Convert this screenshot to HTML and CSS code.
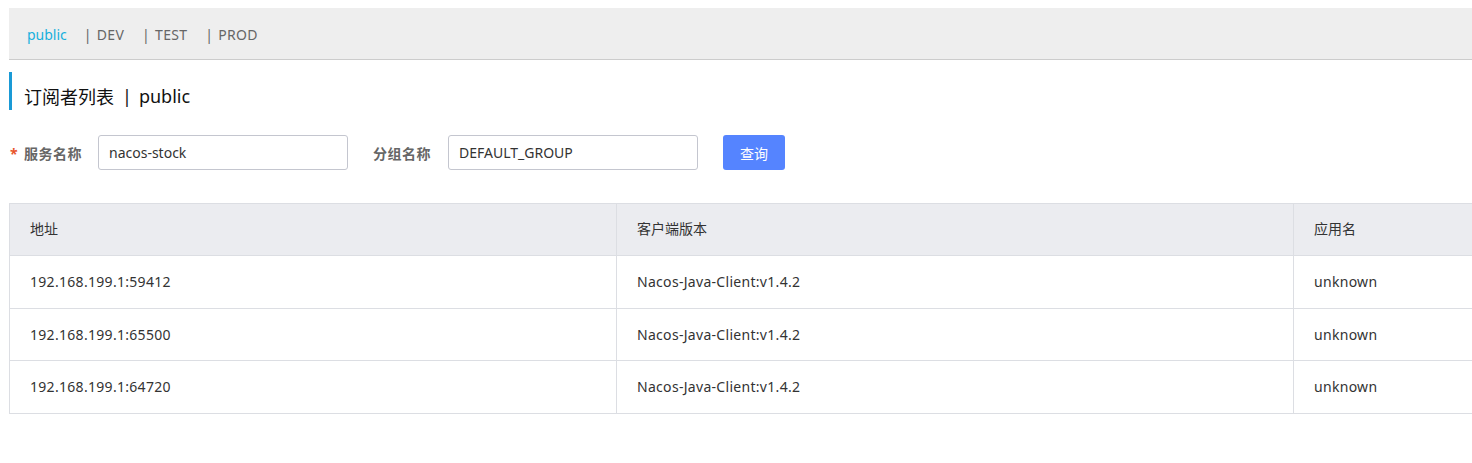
FILE: index.html
```html
<!DOCTYPE html>
<html lang="zh-CN">
<head>
<meta charset="utf-8">
<title>订阅者列表</title>
<link rel="stylesheet" href="styles.css">
</head>
<body>
<div class="page">
  <div class="ns-bar">
    <span class="ns ns-active">public</span>
    <span class="ns"><span class="sep">|</span> DEV</span>
    <span class="ns"><span class="sep">|</span> TEST</span>
    <span class="ns"><span class="sep">|</span> PROD</span>
  </div>

  <div class="title">
    <span>订阅者列表</span><span class="title-sep">|</span><span>public</span>
  </div>

  <form class="search">
    <label class="label"><span class="req">*</span>服务名称</label>
    <input class="input" type="text" value="nacos-stock">
    <label class="label label-2">分组名称</label>
    <input class="input" type="text" value="DEFAULT_GROUP">
    <button class="btn" type="button">查询</button>
  </form>

  <table class="table">
    <colgroup>
      <col class="c1"><col class="c2"><col class="c3">
    </colgroup>
    <thead>
      <tr><th>地址</th><th>客户端版本</th><th>应用名</th></tr>
    </thead>
    <tbody>
      <tr><td>192.168.199.1:59412</td><td>Nacos-Java-Client:v1.4.2</td><td>unknown</td></tr>
      <tr><td>192.168.199.1:65500</td><td>Nacos-Java-Client:v1.4.2</td><td>unknown</td></tr>
      <tr><td>192.168.199.1:64720</td><td>Nacos-Java-Client:v1.4.2</td><td>unknown</td></tr>
    </tbody>
  </table>
</div>
</body>
</html>
```

FILE: styles.css
```css
html, body {
  margin: 0;
  padding: 0;
  background: #fff;
  overflow: hidden;
}
body {
  font-family: "Noto Sans", "Noto Sans CJK SC", sans-serif;
  font-size: 14px;
  color: #333;
}
.page {
  width: 1560px;
  padding: 8px 0 0 9px;
}
.ns-bar {
  background: #eeeeee;
  border-bottom: 1px solid #cccccc;
  display: flex;
  align-items: center;
  padding-left: 18px;
  padding-top: 2px;
  box-sizing: border-box;
  height: 52px;
}
.ns {
  color: #666;
  font-size: 14px;
  margin-right: 18px;
  line-height: 20px;
  letter-spacing: 0.3px;
}
.ns-active {
  color: #17b0dd;
  margin-right: 17px;
  letter-spacing: 0;
}
.sep {
  margin-right: 1px;
}
.title {
  margin-top: 12px;
  height: 38px;
  border-left: 3px solid #1a9ad6;
  padding-left: 12px;
  padding-top: 9px;
  box-sizing: border-box;
  display: flex;
  align-items: center;
  font-size: 18px;
  color: #111;
}
.title-sep {
  margin: 0 7px 0 8px;
}
.search {
  margin-top: 25px;
  display: flex;
  align-items: center;
  height: 35px;
}
.label {
  font-weight: bold;
  color: #666;
  font-size: 14px;
  margin-left: 1px;
  width: 88px;
  letter-spacing: 0.5px;
}
.label-2 {
  width: 75px;
  margin-left: 25px;
}
.req {
  color: #e8552d;
  margin-right: 6px;
}
.input {
  box-sizing: border-box;
  width: 250px;
  height: 35px;
  border: 1px solid #c4c6cf;
  border-radius: 3px;
  padding: 0 10px;
  font-family: inherit;
  font-size: 14px;
  color: #333;
  outline: none;
}
.btn {
  margin-left: 25px;
  width: 62px;
  height: 35px;
  border: none;
  border-radius: 3px;
  background: #5584ff;
  color: #fff;
  font-family: inherit;
  font-size: 14px;
  padding: 0;
}
.table {
  margin-top: 33px;
  border-collapse: collapse;
  table-layout: fixed;
  width: 1551px;
  border: 1px solid #dcdee3;
}
.c1 { width: 607px; }
.c2 { width: 677px; }
.c3 { width: auto; }
.table th, .table td {
  box-sizing: border-box;
  padding: 0 20px;
  text-align: left;
  font-weight: normal;
  font-size: 14px;
  color: #333;
  border: 1px solid #dcdee3;
}
.table th {
  height: 52px;
  padding-bottom: 3px;
  background: #ebecf0;
}
.table td {
  height: 52.6px;
  letter-spacing: 0.3px;
}
```
